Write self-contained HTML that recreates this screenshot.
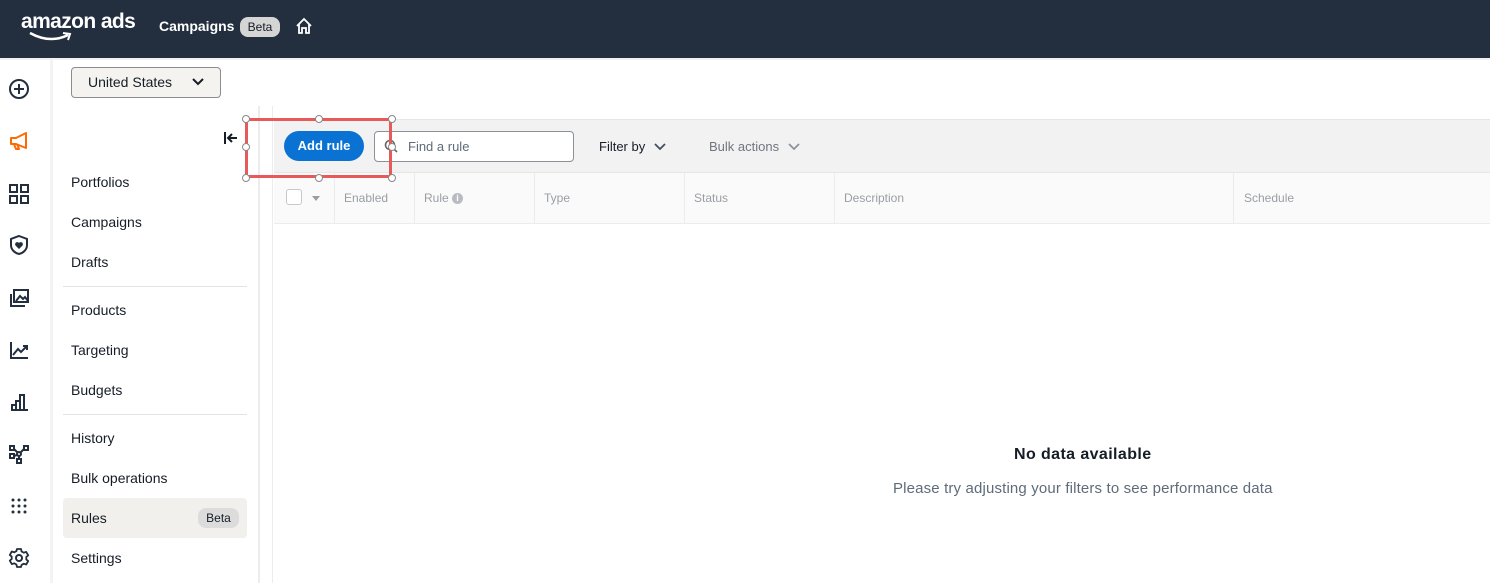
<!DOCTYPE html>
<html><head><style>
*{box-sizing:border-box;margin:0;padding:0}
body{width:1490px;height:583px;overflow:hidden;background:#fff;font-family:"Liberation Sans",sans-serif;position:relative;color:#161d26}
.top{position:absolute;left:0;top:0;width:1490px;height:58px;background:#232f3e}
.abs{position:absolute}
.nav{position:absolute;left:71px;font-size:14px;color:#161d26}
.ic{position:absolute;left:8px;width:22px;height:22px}
.th{position:absolute;top:191px;font-size:12px;color:#9a9ea3}
.vl{position:absolute;top:173px;width:1px;height:50px;background:#ececec}
</style></head><body>
<div class="top">
  <div class="abs" style="left:21px;top:10px;color:#fff;font-size:21px;font-weight:bold;letter-spacing:-0.6px">amazon ads</div>
  <svg class="abs" style="left:28px;top:30px" width="46" height="14" viewBox="0 0 46 14"><path d="M2 3 Q22 14 40 5" stroke="#fff" stroke-width="2.5" fill="none"/><path d="M35 3 L42 4 L40 10" stroke="#fff" stroke-width="2" fill="none"/></svg>
  <div class="abs" style="left:159px;top:18px;color:#fff;font-size:14px;font-weight:bold">Campaigns</div>
  <div class="abs" style="left:240px;top:17px;width:40px;height:20px;border-radius:8px;background:#d5d5d5;color:#161d26;font-size:12px;text-align:center;line-height:20px">Beta</div>
  <svg class="abs" style="left:295px;top:17px" width="18" height="18" viewBox="0 0 18 18"><path d="M2 9 L9 2 L16 9 M4 7 V16 H7 V11 H11 V16 H14 V7" stroke="#fff" stroke-width="1.8" fill="none"/></svg>
</div>
<div class="abs" style="left:0;top:58px;width:1490px;height:2px;background:#f0f0f0"></div>
<div class="abs" style="left:50px;top:60px;width:3px;height:523px;background:#f3f3f3"></div>
<div class="abs" style="left:258px;top:106px;width:2px;height:477px;background:#ececec"></div>
<div class="abs" style="left:272px;top:106px;width:1px;height:477px;background:#ececec"></div>
<svg class="ic" style="top:78px" viewBox="0 0 22 22"><circle cx="11" cy="11" r="9" stroke="#232f3e" stroke-width="2" fill="none"/><path d="M11 6v10M6 11h10" stroke="#232f3e" stroke-width="2"/></svg>
<svg class="ic" style="top:130px" viewBox="0 0 22 22"><path d="M3 8h5l10-5v15l-10-4H3z M6 14l2 5h3l-2-5" stroke="#ff6a00" stroke-width="2" fill="none" stroke-linejoin="round"/></svg>
<svg class="ic" style="top:183px" viewBox="0 0 22 22"><g stroke="#232f3e" stroke-width="2" fill="none"><rect x="2" y="2" width="7" height="7"/><rect x="13" y="2" width="7" height="7"/><rect x="2" y="13" width="7" height="7"/><rect x="13" y="13" width="7" height="7"/></g></svg>
<svg class="ic" style="top:234px" viewBox="0 0 22 22"><path d="M11 2l8 3v6c0 5-4 8-8 9-4-1-8-4-8-9V5z" stroke="#232f3e" stroke-width="2" fill="none"/><path d="M11 15l-3.5-3.5a2 2 0 0 1 3.5-2.5a2 2 0 0 1 3.5 2.5z" fill="#232f3e"/></svg>
<svg class="ic" style="top:287px" viewBox="0 0 22 22"><g stroke="#232f3e" stroke-width="2" fill="none"><rect x="6" y="3" width="14" height="12"/><path d="M3 7v12h14"/><path d="M8 14l4-5 3 3 2-2 3 4"/></g></svg>
<svg class="ic" style="top:339px" viewBox="0 0 22 22"><path d="M3 3v16h17 M5 16l5-6 3 3 6-6 M15 7h4v4" stroke="#232f3e" stroke-width="2" fill="none"/></svg>
<svg class="ic" style="top:391px" viewBox="0 0 22 22"><path d="M3 19h17 M4 19v-5h4v5 M8 19v-9h4v9 M12 19V4h4v15" stroke="#232f3e" stroke-width="2" fill="none"/></svg>
<svg class="ic" style="top:443px" viewBox="0 0 22 22"><g stroke="#232f3e" stroke-width="2" fill="none"><rect x="2" y="3" width="4" height="4"/><rect x="16" y="3" width="4" height="4"/><rect x="2" y="11" width="4" height="4"/><rect x="9" y="16" width="4" height="4"/><circle cx="11" cy="11" r="2"/><path d="M6 6l4 4M16 6l-4 4M6 13l3-1M11 13v3"/></g></svg>
<svg class="ic" style="top:495px" viewBox="0 0 22 22"><g fill="#232f3e"><circle cx="5" cy="5" r="1.5"/><circle cx="11" cy="5" r="1.5"/><circle cx="17" cy="5" r="1.5"/><circle cx="5" cy="11" r="1.5"/><circle cx="11" cy="11" r="1.5"/><circle cx="17" cy="11" r="1.5"/><circle cx="5" cy="17" r="1.5"/><circle cx="11" cy="17" r="1.5"/><circle cx="17" cy="17" r="1.5"/></g></svg>
<svg class="ic" style="top:547px" viewBox="0 0 22 22"><circle cx="11" cy="11" r="3" stroke="#232f3e" stroke-width="2" fill="none"/><path d="M9 2h4l.6 2.5 2.2 1.2 2.4-.8 2 3.4-1.9 1.7v2.4l1.9 1.7-2 3.4-2.4-.8-2.2 1.2L13 20H9l-.6-2.5-2.2-1.2-2.4.8-2-3.4 1.9-1.7V9.6L1.8 7.9l2-3.4 2.4.8 2.2-1.2z" stroke="#232f3e" stroke-width="1.8" fill="none" stroke-linejoin="round"/></svg>
<div class="abs" style="left:71px;top:67px;width:150px;height:31px;border:1px solid #8c8c8c;border-radius:4px;background:#f4f3f0;font-size:14px;line-height:29px;padding-left:16px">United States
<svg class="abs" style="left:120px;top:10px" width="12" height="8" viewBox="0 0 12 8"><path d="M1 1l5 5 5-5" stroke="#161d26" stroke-width="2" fill="none"/></svg></div>
<svg class="abs" style="left:224px;top:132px" width="14" height="12" viewBox="0 0 14 12"><path d="M1 0v12 M13 6H4 M8 2L4 6l4 4" stroke="#161d26" stroke-width="2" fill="none"/></svg>
<div class="nav" style="top:174px">Portfolios</div>
<div class="nav" style="top:214px">Campaigns</div>
<div class="nav" style="top:254px">Drafts</div>
<div class="abs" style="left:63px;top:286px;width:184px;height:1px;background:#e3e3e3"></div>
<div class="nav" style="top:302px">Products</div>
<div class="nav" style="top:342px">Targeting</div>
<div class="nav" style="top:382px">Budgets</div>
<div class="abs" style="left:63px;top:414px;width:184px;height:1px;background:#e3e3e3"></div>
<div class="nav" style="top:430px">History</div>
<div class="nav" style="top:470px">Bulk operations</div>
<div class="abs" style="left:63px;top:498px;width:184px;height:40px;background:#f2f0ed;border-radius:4px"></div>
<div class="nav" style="top:510px">Rules</div>
<div class="abs" style="left:198px;top:508px;width:41px;height:20px;border-radius:8px;background:#dcdcdc;font-size:12px;text-align:center;line-height:20px">Beta</div>
<div class="nav" style="top:550px">Settings</div>
<div class="abs" style="left:274px;top:119px;width:1216px;height:54px;background:#f2f2f2;border-top:1px solid #e6e6e6;border-bottom:1px solid #e6e6e6"></div>
<div class="abs" style="left:284px;top:131px;width:80px;height:30px;border-radius:15px;background:#0972d3;color:#fff;font-size:13px;font-weight:bold;text-align:center;line-height:30px">Add rule</div>
<div class="abs" style="left:374px;top:131px;width:200px;height:31px;border:1px solid #8c9097;border-radius:4px;background:#fff;font-size:13px;color:#5f6b7a;line-height:29px;padding-left:33px">Find a rule</div>
<svg class="abs" style="left:384px;top:139px" width="14" height="14" viewBox="0 0 14 14"><circle cx="6" cy="6" r="4.5" stroke="#666" stroke-width="1.6" fill="none"/><path d="M9.5 9.5L13 13" stroke="#666" stroke-width="1.6"/></svg>
<div class="abs" style="left:599px;top:139px;font-size:13px;color:#161d26">Filter by</div>
<svg class="abs" style="left:654px;top:143px" width="12" height="8" viewBox="0 0 12 8"><path d="M1 1l5 5 5-5" stroke="#414d5c" stroke-width="1.8" fill="none"/></svg>
<div class="abs" style="left:709px;top:139px;font-size:13px;color:#6f7680">Bulk actions</div>
<svg class="abs" style="left:788px;top:143px" width="12" height="8" viewBox="0 0 12 8"><path d="M1 1l5 5 5-5" stroke="#8d939b" stroke-width="1.8" fill="none"/></svg>
<div class="abs" style="left:274px;top:173px;width:1216px;height:51px;background:#fafafa;border-bottom:1px solid #ececec"></div>
<div class="abs" style="left:286px;top:189px;width:16px;height:16px;border:1px solid #c8c8c8;border-radius:3px;background:#fff"></div>
<svg class="abs" style="left:312px;top:196px" width="8" height="5" viewBox="0 0 8 5"><path d="M0 0h8L4 5z" fill="#9a9ea3"/></svg>
<div class="vl" style="left:334px"></div><div class="vl" style="left:414px"></div><div class="vl" style="left:534px"></div><div class="vl" style="left:684px"></div><div class="vl" style="left:834px"></div><div class="vl" style="left:1233px"></div>
<div class="th" style="left:344px">Enabled</div>
<div class="th" style="left:424px">Rule</div>
<div class="abs" style="left:452px;top:193px;width:11px;height:11px;border-radius:50%;background:#b8bbbf;color:#fff;font-size:9px;text-align:center;line-height:11px;font-weight:bold">i</div>
<div class="th" style="left:544px">Type</div>
<div class="th" style="left:694px">Status</div>
<div class="th" style="left:844px">Description</div>
<div class="th" style="left:1244px">Schedule</div>
<div class="abs" style="left:1014px;top:446px;font-size:16px;font-weight:bold;color:#161d26;letter-spacing:0.4px">No data available</div>
<div class="abs" style="left:893px;top:480px;font-size:15px;color:#5f6b7a;letter-spacing:0.15px">Please try adjusting your filters to see performance data</div>
<div class="abs" style="left:245px;top:118px;width:147px;height:60px;border:3px solid #e85a5a"></div>
<div class="abs" style="left:242px;top:115px;width:8px;height:8px;border-radius:50%;border:1px solid #888;background:#fff"></div>
<div class="abs" style="left:315px;top:115px;width:8px;height:8px;border-radius:50%;border:1px solid #888;background:#fff"></div>
<div class="abs" style="left:388px;top:115px;width:8px;height:8px;border-radius:50%;border:1px solid #888;background:#fff"></div>
<div class="abs" style="left:242px;top:143px;width:8px;height:8px;border-radius:50%;border:1px solid #888;background:#fff"></div>
<div class="abs" style="left:388px;top:143px;width:8px;height:8px;border-radius:50%;border:1px solid #888;background:#fff"></div>
<div class="abs" style="left:242px;top:174px;width:8px;height:8px;border-radius:50%;border:1px solid #888;background:#fff"></div>
<div class="abs" style="left:315px;top:174px;width:8px;height:8px;border-radius:50%;border:1px solid #888;background:#fff"></div>
<div class="abs" style="left:388px;top:174px;width:8px;height:8px;border-radius:50%;border:1px solid #888;background:#fff"></div>
</body></html>
